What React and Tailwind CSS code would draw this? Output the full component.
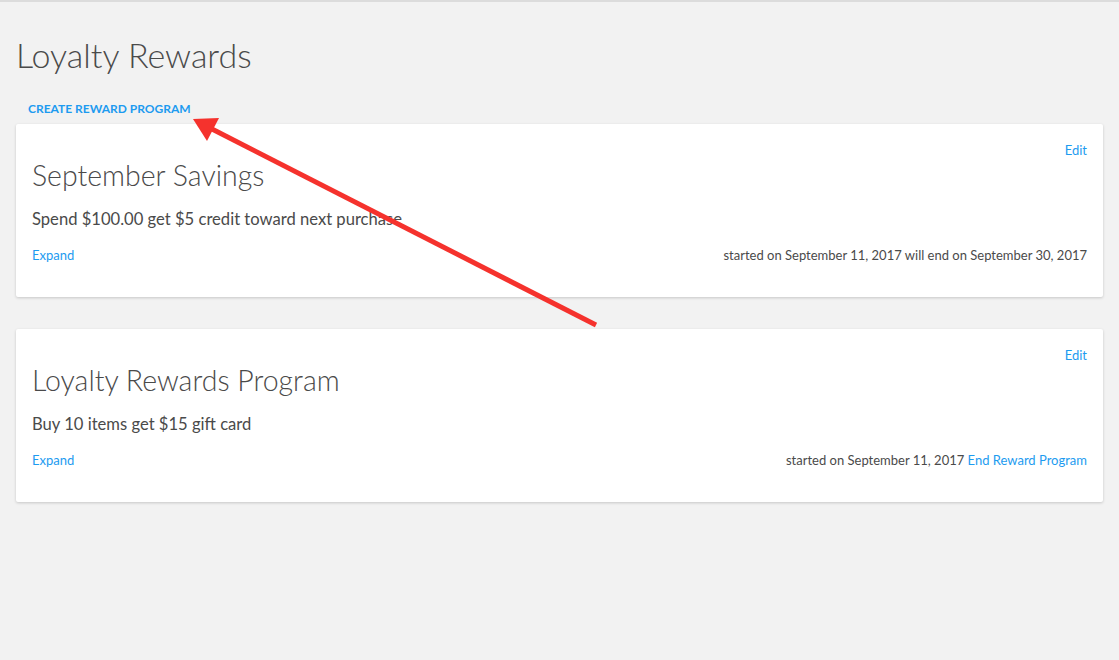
import React from 'react'

const PROGRAMS = [
  {
    id: 1,
    name: 'September Savings',
    summary: 'Spend $100.00 get $5 credit toward next purchase',
    started: 'September 11, 2017',
    ends: 'September 30, 2017',
  },
  {
    id: 2,
    name: 'Loyalty Rewards Program',
    summary: 'Buy 10 items get $15 gift card',
    started: 'September 11, 2017',
    ends: null,
  },
]

function ProgramCard({ program }) {
  return (
    <div className="bg-white rounded-[2px] shadow-[0_1px_3px_rgba(0,0,0,0.18)] px-4 pt-[18px] pb-[32px]">
      <div className="flex justify-end">
        <a href="#" className="text-[13px] leading-4 text-[#1d9bf0]">Edit</a>
      </div>
      <h2 className="text-[28.5px] leading-[34px] font-light text-[#4a4a4a]">{program.name}</h2>
      <p className="mt-[15px] text-[16.6px] leading-6 text-[#4a4a4a]">{program.summary}</p>
      <div className="mt-[14px] flex items-center justify-between text-[13px] leading-5">
        <a href="#" className="text-[#1d9bf0]">Expand</a>
        <span className="text-[#4a4a4a]">
          started on {program.started}
          {program.ends ? (
            <> will end on {program.ends}</>
          ) : (
            <> <a href="#" className="text-[#1d9bf0]">End Reward Program</a></>
          )}
        </span>
      </div>
    </div>
  )
}

export default function App() {
  return (
    <div className="relative min-h-[660px] bg-[#f2f2f2] font-['Lato',sans-serif] border-t-2 border-[#dcdcdc]">
      <div className="px-4">
        <h1 className="pt-[31px] text-[34px] leading-[44px] font-light text-[#4a4a4a]">Loyalty Rewards</h1>
        <div className="pl-3 mt-[25px] h-[14px] flex items-center">
          <a href="#" className="text-[12px] font-bold text-[#1d9bf0]">CREATE REWARD PROGRAM</a>
        </div>
        <div className="mt-[8px] flex flex-col gap-8">
          {PROGRAMS.map(p => (
            <ProgramCard key={p.id} program={p} />
          ))}
        </div>
      </div>

      {/* annotation arrow */}
      <svg className="absolute left-0 top-0 pointer-events-none" width="1119" height="660">
        <line x1="596" y1="323" x2="210" y2="126" stroke="#f5322d" strokeWidth="5" />
        <polygon points="193,117 219,116 207,139" fill="#f5322d" />
      </svg>
    </div>
  )
}
